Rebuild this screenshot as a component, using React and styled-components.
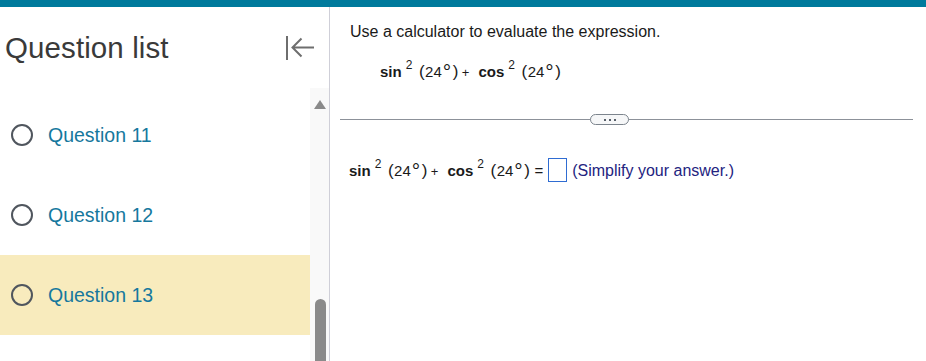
import React from 'react'
import styled, { createGlobalStyle } from 'styled-components'

const GlobalStyle = createGlobalStyle`
body {
  margin: 0;
  font-family: 'Liberation Sans', Arial, sans-serif;
  background: #fff;
}
`

const questions = [
  { id: 11, current: false },
  { id: 12, current: false },
  { id: 13, current: true },
]

const Angle = () => (
  <Arg>
    <Paren>(</Paren>24<Deg>°</Deg><Paren>)</Paren>
  </Arg>
)

const Expr = ({ answer }) => (
  <MathLine>
    <Fn>sin</Fn>
    <Sup>2</Sup>
    <Angle />
    <Op>+</Op>
    <Fn>cos</Fn>
    <Sup>2</Sup>
    <Angle />
    {answer && (
      <>
        <Eq>=</Eq>
        <AnswerBox />
        <Hint>(Simplify your answer.)</Hint>
      </>
    )}
  </MathLine>
)

const App = () => {
  return (
    <Page>
      <GlobalStyle />
      <TopBar />
      <Main>
        <Sidebar>
          <SideHeader>
            <Title>Question list</Title>
            <CollapseBtn>
              <svg width="30" height="26" viewBox="0 0 30 26">
                <path d="M2 1 V25" stroke="#6e6e6e" strokeWidth="2" fill="none" />
                <path d="M7.5 12.5 H29 M16.5 3.5 L7.5 12.5 L16.5 21.5" stroke="#6e6e6e" strokeWidth="2" fill="none" />
              </svg>
            </CollapseBtn>
          </SideHeader>
          <ListArea>
            <List>
              {questions.map(q => (
                <Row key={q.id} current={q.current}>
                  <Radio />
                  <QLabel>Question {q.id}</QLabel>
                </Row>
              ))}
            </List>
            <Scrollbar>
              <ArrowUp />
              <Thumb />
            </Scrollbar>
          </ListArea>
        </Sidebar>

        <Content>
          <Prompt>Use a calculator to evaluate the expression.</Prompt>
          <TopExpr>
            <Expr />
          </TopExpr>
          <Divider>
            <MoreBtn>
              <Dot /><Dot /><Dot />
            </MoreBtn>
          </Divider>
          <AnswerRow>
            <Expr answer />
          </AnswerRow>
        </Content>
      </Main>
    </Page>
  )
}

const Page = styled.div`
width: 926px;
height: 361px;
overflow: hidden;
display: flex;
flex-direction: column;
`

const TopBar = styled.div`
height: 7px;
background: #007a9c;
flex-shrink: 0;
`

const Main = styled.div`
flex: 1;
display: flex;
min-height: 0;
`

const Sidebar = styled.div`
width: 329px;
flex-shrink: 0;
border-right: 1px solid #cfcfd8;
display: flex;
flex-direction: column;
`

const SideHeader = styled.div`
height: 81px;
display: flex;
align-items: center;
justify-content: space-between;
padding: 0 14px 0 5px;
box-sizing: border-box;
`

const Title = styled.h2`
margin: 0;
font-weight: 400;
font-size: 29.5px;
color: #3a3a3a;
letter-spacing: 0.1px;
`

const CollapseBtn = styled.div`
display: flex;
width: 30px;
height: 26px;
margin-top: 1px;
`

const ListArea = styled.div`
flex: 1;
display: flex;
min-height: 0;
`

const List = styled.div`
width: 310px;
padding-top: 7px;
`

const Row = styled.div`
height: 80px;
display: flex;
align-items: center;
padding-left: 11px;
background: ${p => (p.current ? '#f8ebbd' : 'transparent')};
`

const Radio = styled.span`
width: 18px;
height: 18px;
border: 2.3px solid #50565e;
border-radius: 50%;
margin-right: 15px;
`

const QLabel = styled.span`
font-size: 19.5px;
color: #16789d;
`

const Scrollbar = styled.div`
width: 19px;
background: #f9f9f9;
display: flex;
flex-direction: column;
align-items: center;
justify-content: space-between;
padding-top: 12px;
`

const ArrowUp = styled.div`
width: 0;
height: 0;
border-left: 6px solid transparent;
border-right: 6px solid transparent;
border-bottom: 9px solid #8a8a8a;
margin-left: 1px;
`

const Thumb = styled.div`
width: 11px;
height: 62px;
background: #8a8a8a;
border-radius: 6px 6px 0 0;
margin-left: 1px;
`

const Content = styled.div`
flex: 1;
padding: 15px 13px 0 10px;
display: flex;
flex-direction: column;
`

const Prompt = styled.p`
margin: 0 0 0 10px;
font-size: 16px;
line-height: 20px;
color: #1a1a1a;
`

const TopExpr = styled.div`
margin: 20px 0 0 40px;
`

const MathLine = styled.div`
display: flex;
align-items: baseline;
font-size: 15px;
color: #1a1a1a;
white-space: nowrap;
`

const Fn = styled.span`
font-weight: 700;
font-size: 15px;
`

const Sup = styled.span`
font-size: 12px;
position: relative;
top: -8px;
margin: 0 6px 0 4px;
`

const Arg = styled.span`
font-size: 15px;
`

const Paren = styled.span`
font-size: 17px;
margin: 0 0.5px;
`

const Deg = styled.span`
font-size: 21px;
line-height: 0;
position: relative;
top: 2px;
margin: 0 1px;
`

const Op = styled.span`
font-size: 13px;
margin: 0 9px 0 3px;
`

const Eq = styled.span`
font-size: 15px;
margin: 0 5px 0 4px;
`

const AnswerBox = styled.span`
display: inline-block;
width: 17px;
height: 22px;
border: 1.5px solid #2f6cd2;
position: relative;
top: 6px;
margin-right: 5px;
`

const Hint = styled.span`
font-size: 16px;
color: #232380;
`

const Divider = styled.div`
margin-top: 32px;
height: 11px;
display: flex;
align-items: center;
justify-content: center;
background: linear-gradient(#8c9199, #8c9199) center / 100% 1px no-repeat;
`

const MoreBtn = styled.div`
width: 37px;
height: 9px;
border: 1px solid #7c848d;
border-radius: 6px;
background: #f6f7f8;
display: flex;
align-items: center;
justify-content: center;
gap: 3px;
margin-right: 34px;
`

const Dot = styled.span`
width: 2px;
height: 2px;
background: #59606a;
`

const AnswerRow = styled.div`
margin-top: 27px;
padding-left: 9px;
`

export default App
